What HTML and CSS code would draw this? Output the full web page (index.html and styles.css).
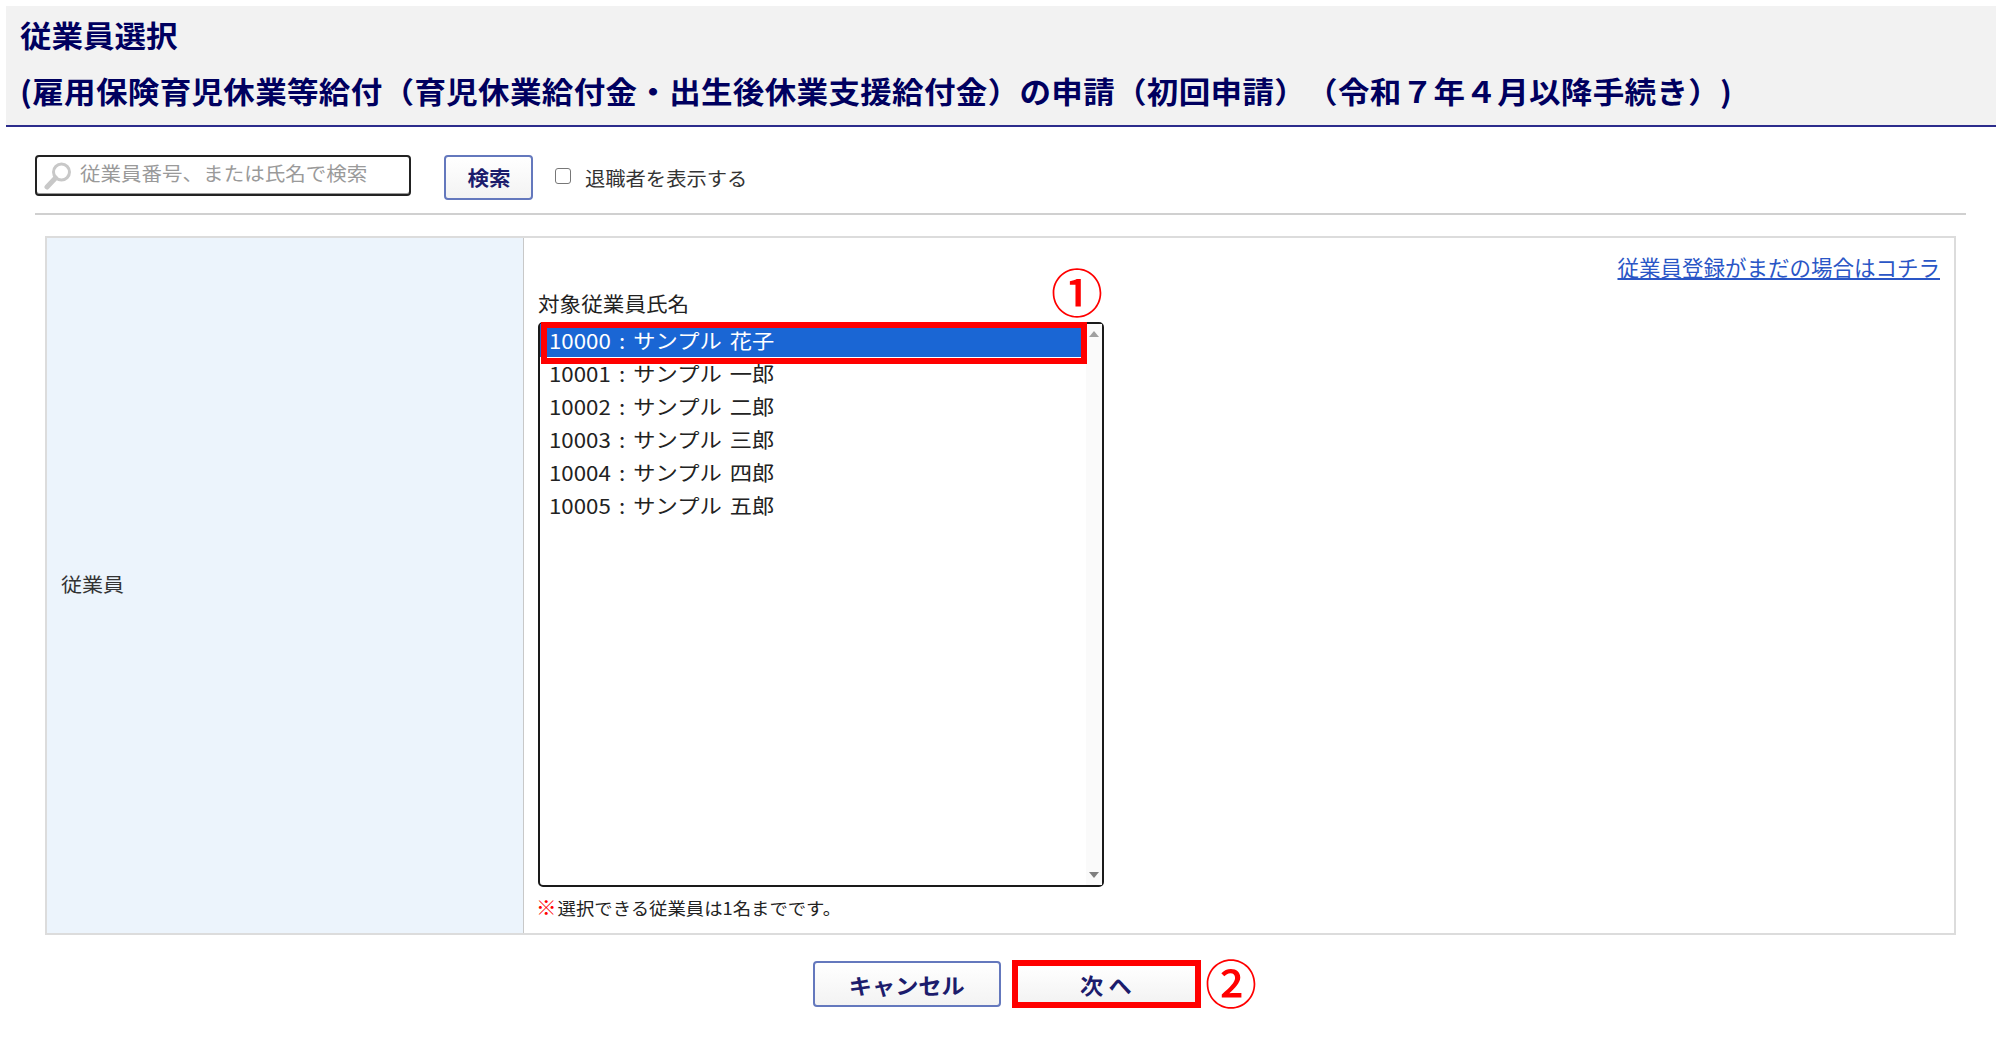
FILE: index.html
```html
<!DOCTYPE html>
<html lang="ja">
<head>
<meta charset="utf-8">
<title>従業員選択</title>
<link rel="stylesheet" href="styles.css">
</head>
<body>
<div class="page">
  <header class="title">
    <h1 class="title-line"><span class="wide">従業員選択</span></h1>
    <h1 class="title-line title-long"><span class="wide">(雇用保険育児休業等給付（育児休業給付金・出生後休業支援給付金）の申請（初回申請）（令和７年４月以降手続き）)</span></h1>
  </header>

  <form class="search">
    <div class="search-box">
      <svg class="search-icon" width="30" height="28" viewBox="0 0 30 28"><circle cx="18.5" cy="10" r="8" fill="#fff" stroke="#c8c8c8" stroke-width="3"/><path d="M12.5 16 L4 25" stroke="#c8c8c8" stroke-width="5" stroke-linecap="round"/></svg>
      <input class="search-input" type="text" placeholder="従業員番号、または氏名で検索">
    </div>
    <button class="btn btn-search" type="button"><span class="wide">検索</span></button>
    <label class="retired"><span class="checkbox"></span><span class="wide">退職者を表示する</span></label>
  </form>

  <section class="form-table">
    <div class="form-head"><span class="wide">従業員</span></div>
    <div class="form-body">
      <div class="link-row"><a class="reg-link" href="#">従業員登録がまだの場合はコチラ</a></div>
      <div class="list-label"><span class="wide">対象従業員氏名</span></div>
      <div class="listbox">
        <ul class="options">
          <li class="option selected"><span class="wide">10000 : サンプル 花子</span></li>
          <li class="option"><span class="wide">10001 : サンプル 一郎</span></li>
          <li class="option"><span class="wide">10002 : サンプル 二郎</span></li>
          <li class="option"><span class="wide">10003 : サンプル 三郎</span></li>
          <li class="option"><span class="wide">10004 : サンプル 四郎</span></li>
          <li class="option"><span class="wide">10005 : サンプル 五郎</span></li>
        </ul>
        <div class="scrollbar"><span class="arrow-up"></span><span class="arrow-down"></span></div>
      </div>
      <p class="note"><span class="wide"><span class="mark">※</span>選択できる従業員は1名までです。</span></p>
    </div>
  </section>

  <div class="actions">
    <button class="btn btn-action" type="button"><span class="wide">キャンセル</span></button>
    <button class="btn btn-action btn-marked" type="button"><span class="wide">次 へ</span></button>
  </div>

  <div class="mark-row-box"></div>
  <span class="step step-1">①</span>
  <span class="step step-2">②</span>
</div>
</body>
</html>
```

FILE: styles.css
```css
* { box-sizing: border-box; }
html, body { margin: 0; padding: 0; background: #fff; }
body {
  font-family: "Noto Sans CJK JP", "Liberation Sans", sans-serif;
  color: #222;
  font-size: 19px;
  text-spacing-trim: space-all;
}
.page { position: relative; width: 2000px; height: 1057px; overflow: hidden; }
.wide { display: inline-block; transform: scaleX(1.08); transform-origin: left center; white-space: nowrap; }

.title {
  margin: 6px 4px 0 6px;
  height: 121px;
  padding: 0 0 0 14px;
  background: #f2f2f2;
  border-bottom: 2px solid #2c2c8c;
}
.title-line {
  margin: 0;
  font-size: 29.2px;
  line-height: 56px;
  font-weight: 700;
  color: #00005f;
}
.title-long { letter-spacing: 0.3px; }

.search {
  display: flex;
  align-items: flex-start;
  margin: 0 34px 0 35px;
  height: 88px;
  padding-top: 28px;
  border-bottom: 2px solid #d0d0d0;
}
.search-box {
  display: flex;
  align-items: center;
  width: 376px;
  height: 41px;
  padding-left: 6px;
  border: 2px solid #222;
  border-radius: 4px;
  box-shadow: inset 0 -1px 0 #999;
}
.search-icon { flex: none; }
.search-input {
  width: 300px;
  margin: -6px 0 0 7px;
  padding: 0;
  border: 0;
  outline: 0;
  background: transparent;
  font: 19px "Noto Sans CJK JP", sans-serif;
  transform: scaleX(1.08);
  transform-origin: left center;
}
.search-input::placeholder { color: #9a9a9a; opacity: 1; }

.btn {
  font-family: "Noto Sans CJK JP", sans-serif;
  font-weight: 700;
  color: #1c1c6c;
  background: linear-gradient(#fff, #f3f3f3);
  border: 2px solid #6478bd;
  border-radius: 4px;
  padding: 0;
  text-align: center;
}
.btn-search { width: 89px; height: 45px; margin-left: 33px; font-size: 20px; }
.btn-search .wide, .btn-action .wide { transform-origin: center; }

.retired { display: flex; align-items: center; height: 45px; margin-left: 22px; font-size: 18.8px; color: #333; }
.checkbox {
  width: 16px;
  height: 16px;
  margin: -4px 14px 0 0;
  background: #fff;
  border: 1.5px solid #777;
  border-radius: 3px;
}

.form-table {
  display: grid;
  grid-template-columns: 477px 1fr;
  width: 1911px;
  height: 699px;
  margin: 21px 0 0 45px;
  border: 2px solid #dcdcdc;
}
.form-head {
  display: flex;
  align-items: center;
  padding: 0 0 5px 14px;
  background: #ecf4fc;
  border-right: 1px solid #c8c8c8;
  font-size: 19.5px;
  color: #333;
}
.form-body { padding: 14px 14px 0 14px; }
.link-row { display: flex; justify-content: flex-end; height: 30px; }
.reg-link {
  font-size: 21.5px;
  line-height: 30px;
  color: #2a56c6;
  text-decoration: underline;
}
.list-label { height: 40px; padding-top: 7px; line-height: 30px; font-size: 20px; color: #222; }
.listbox {
  display: flex;
  width: 566px;
  height: 565px;
  border: 2px solid #1a1a1a;
  border-radius: 5px;
}
.options { flex: 1; margin: 0; padding: 0; list-style: none; }
.option { height: 33px; padding-left: 9px; font-size: 20.6px; line-height: 33px; color: #222; word-spacing: 3px; }
.option.selected { color: #fff; background: #1a66d4; }
.scrollbar {
  flex: none;
  display: flex;
  flex-direction: column;
  justify-content: space-between;
  align-items: center;
  width: 16px;
  padding: 7px 0;
  background: #fafafa;
}
.arrow-up { border: 5px solid transparent; border-top: 0; border-bottom: 6px solid #a0a0a0; }
.arrow-down { border: 5px solid transparent; border-bottom: 0; border-top: 6px solid #7f7f7f; }

.note { margin: 5px 0 0 -2px; font-size: 17px; line-height: 30px; color: #222; }
.mark { color: #f00; font-weight: 700; font-size: 19px; margin-right: 1px; }

.actions {
  display: flex;
  align-items: center;
  justify-content: center;
  gap: 11px;
  height: 48px;
  margin-top: 25px;
  padding-left: 13px;
}
.btn-action { width: 188px; height: 46px; font-size: 21.5px; }
.btn-marked { width: 189px; height: 48px; border: 6px solid #f00; border-radius: 0; }

.mark-row-box {
  position: absolute;
  left: 541px;
  top: 322px;
  width: 546px;
  height: 42px;
  border: 6px solid #f00;
}
.step {
  position: absolute;
  color: #f00;
  font-size: 52px;
  font-weight: 500;
  line-height: 52px;
  width: 52px;
  text-align: center;
}
.step-1 { left: 1051px; top: 265px; }
.step-2 { left: 1205px; top: 956px; }
```
